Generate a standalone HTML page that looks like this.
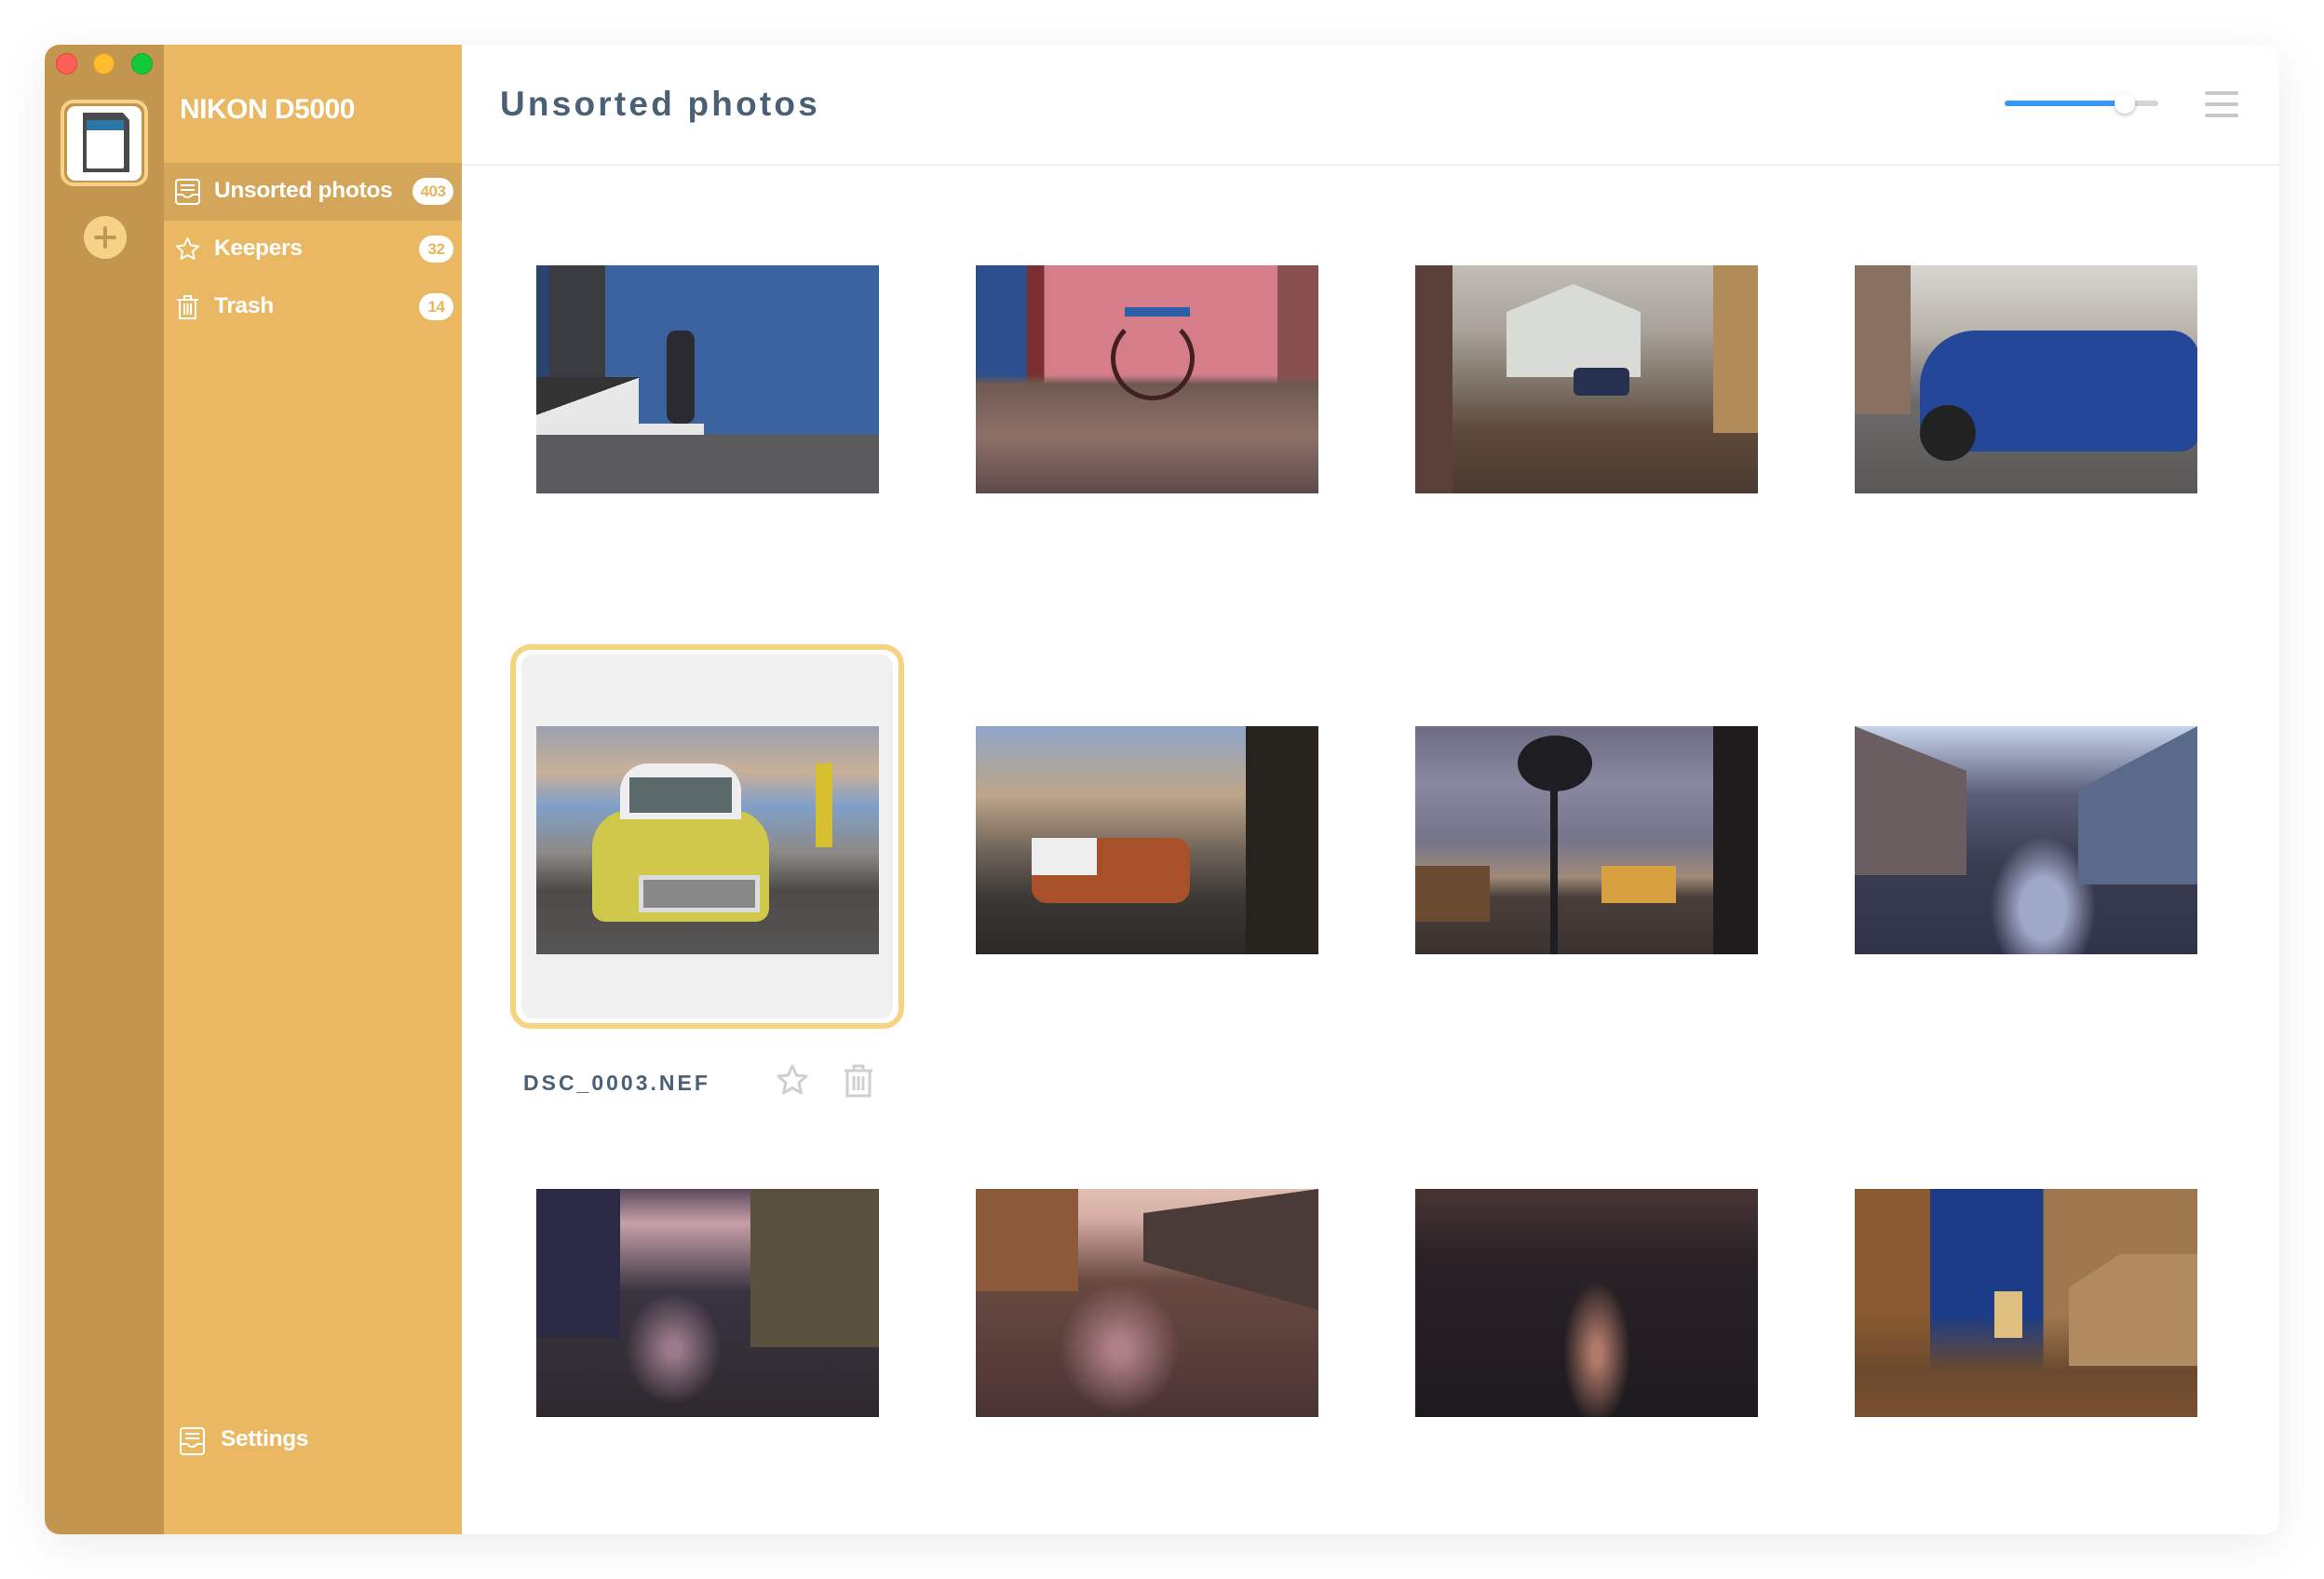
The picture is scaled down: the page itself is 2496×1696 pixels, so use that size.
<!DOCTYPE html>
<html><head><meta charset="utf-8"><style>
*{margin:0;padding:0;box-sizing:border-box}
body{width:2496px;height:1696px;background:#fff;position:relative;overflow:hidden;font-family:"Liberation Sans",sans-serif}
.win{position:absolute;left:48px;top:48px;width:2400px;height:1600px;border-radius:16px;overflow:hidden;background:#fff;box-shadow:0 10px 50px rgba(0,0,0,.08)}
.strip{position:absolute;left:0;top:0;width:128px;height:100%;background:#c2964f}
.side{position:absolute;left:128px;top:0;width:320px;height:100%;background:#eab862}
.dot{position:absolute;top:9px;width:23px;height:23px;border-radius:50%}
.abs{position:absolute}
.nav{position:absolute;left:0;width:320px;height:62px;color:#fff;font-weight:bold;font-size:24.5px;letter-spacing:-0.3px}
.nav span.t{position:absolute;left:54px;top:16px}
.badge{position:absolute;right:9px;top:16px;height:29px;border-radius:15px;background:#fff;color:#e8b45c;font-size:17px;font-weight:bold;text-align:center;line-height:29px;letter-spacing:-0.5px}
.nav svg{position:absolute;left:12px;top:17px}
.ph{position:absolute;width:368px;height:245px;overflow:hidden}
.ph i{position:absolute;display:block}
</style></head><body>
<div class="win">
<div class="strip"></div>
<div class="dot" style="left:12px;background:#fe5f57;border:1px solid #e0443e"></div>
<div class="dot" style="left:52px;background:#febc2e;border:1px solid #dea123"></div>
<div class="dot" style="left:93px;background:#12c93a;border:1px solid #0fa82d"></div>
<div class="abs" style="left:17px;top:59px;width:94px;height:93px;border:4px solid #f5d285;border-radius:14px;background:#c2964f"></div>
<div class="abs" style="left:24px;top:66px;width:80px;height:80px;border-radius:9px;background:#fff"></div>
<svg class="abs" style="left:41px;top:73px" width="50" height="64" viewBox="0 0 50 64"><path d="M0 0H43L50 8V64H0Z" fill="#4a4a4a"/><rect x="4" y="8" width="40" height="52" rx="2" fill="#fff"/><rect x="4" y="8" width="40" height="11" fill="#2b76a6"/></svg>
<div class="abs" style="left:42px;top:184px;width:46px;height:46px;border-radius:50%;background:#f5d285"></div>
<div class="abs" style="left:53px;top:205px;width:24px;height:4px;background:#c2964f;border-radius:2px"></div>
<div class="abs" style="left:63px;top:195px;width:4px;height:24px;background:#c2964f;border-radius:2px"></div>

<div class="side">
<div class="abs" style="left:65px;top:53px;color:#fff;font-weight:bold;font-size:30px;letter-spacing:-0.5px;left:17px">NIKON D5000</div>
<div class="nav" style="top:127px;background:#d4a65a">
<svg width="27" height="28" viewBox="0 0 27 28" fill="none" stroke="#fff" stroke-width="2"><rect x="1" y="1" width="25" height="26" rx="3"/><path d="M6 7H21M6 12H21M1 17H8Q13 23 19 17H26"/></svg>
<span class="t">Unsorted photos</span><div class="badge" style="width:44px">403</div></div>
<div class="nav" style="top:189px">
<svg width="27" height="27" viewBox="0 0 27 27" fill="none" stroke="#fff" stroke-width="2" stroke-linejoin="round"><path d="M13.5 2L17 9.5L25 10.5L19 16L20.5 24L13.5 20L6.5 24L8 16L2 10.5L10 9.5Z"/></svg>
<span class="t">Keepers</span><div class="badge" style="width:37px">32</div></div>
<div class="nav" style="top:251px">
<svg width="27" height="28" viewBox="0 0 27 28" fill="none" stroke="#fff" stroke-width="2"><path d="M2 6H25M10 6V2H17V6M5 6V26H22V6M10 10V22M13.5 10V22M17 10V22"/></svg>
<span class="t">Trash</span><div class="badge" style="width:37px">14</div></div>
<div class="nav" style="top:1468px">
<svg style="left:17px" width="27" height="30" viewBox="0 0 27 30" fill="none" stroke="#fff" stroke-width="2"><rect x="1" y="1" width="25" height="28" rx="3"/><path d="M6 7H21M6 12H21M1 18H8Q13 24 19 18H26"/></svg>
<span class="t" style="left:61px">Settings</span></div>
</div>

<div class="abs" style="left:489px;top:43px;color:#4a6075;font-weight:bold;font-size:37px;letter-spacing:3.2px">Unsorted photos</div>
<div class="abs" style="left:448px;top:128px;width:1952px;height:2px;background:#efefef"></div>
<div class="abs" style="left:2105px;top:60px;width:165px;height:6px;border-radius:3px;background:#d6d6d6"></div>
<div class="abs" style="left:2105px;top:60px;width:128px;height:6px;border-radius:3px;background:#3a97f6"></div>
<div class="abs" style="left:2223px;top:52px;width:22px;height:22px;border-radius:50%;background:#fff;box-shadow:0 2px 5px rgba(0,0,0,.25)"></div>
<div class="abs" style="left:2320px;top:50px;width:36px;height:4px;border-radius:2px;background:#c8c8c8"></div>
<div class="abs" style="left:2320px;top:62px;width:36px;height:4px;border-radius:2px;background:#c8c8c8"></div>
<div class="abs" style="left:2320px;top:74px;width:36px;height:4px;border-radius:2px;background:#c8c8c8"></div>

<div class="abs" style="left:500px;top:644px;width:423px;height:413px;border:6px solid #f6d381;border-radius:22px;background:#fff"></div>
<div class="abs" style="left:512px;top:655px;width:399px;height:391px;border-radius:12px;background:#f1f1f1"></div>
<div class="abs" style="left:514px;top:1102px;color:#4a6075;font-weight:bold;font-size:23px;letter-spacing:3px">DSC_0003.NEF</div>
<svg class="abs" style="left:785px;top:1095px" width="36" height="34" viewBox="0 0 36 34" fill="none" stroke="#cfcfcf" stroke-width="3" stroke-linejoin="round"><path d="M18 2L22.5 12L33 13L25 20L27.5 31L18 25.5L8.5 31L11 20L3 13L13.5 12Z"/></svg>
<svg class="abs" style="left:857px;top:1095px" width="34" height="36" viewBox="0 0 34 36" fill="none" stroke="#cfcfcf" stroke-width="3"><path d="M2 7H32M12 7V2H22V7M5 7V34H29V7M12 13V28M17 13V28M22 13V28"/></svg>

<!-- row1 -->
<div class="ph" style="left:528px;top:237px;background:linear-gradient(180deg,#3a63a0 0 74%,#5b5b5e 74% 100%)">
<i style="left:0;top:0;width:14px;height:180px;background:#2a4470"></i>
<i style="left:14px;top:0;width:60px;height:155px;background:#3b3c42"></i>
<i style="left:0;top:120px;width:110px;height:62px;background:linear-gradient(160deg,#333 0 40%,#e8e8e8 40% 100%)"></i>
<i style="left:0;top:170px;width:180px;height:12px;background:#e6e6e6"></i>
<i style="left:140px;top:70px;width:30px;height:100px;background:#2a2a30;border-radius:10px"></i>
</div>
<div class="ph" style="left:1000px;top:237px;background:linear-gradient(180deg,rgba(0,0,0,0) 48%,#6e5a52 52%,#8d7068 75%,#5e4a4a 100%),linear-gradient(90deg,#2d4f8e 0 15%,#7a3030 15% 20%,#d57e8a 20% 88%,#8a5050 88%)">
<i style="left:145px;top:55px;width:90px;height:90px;border:5px solid #402020;border-radius:50%;border-top-color:transparent"></i>
<i style="left:160px;top:45px;width:70px;height:10px;background:#2d5fa8"></i>
</div>
<div class="ph" style="left:1472px;top:237px;background:linear-gradient(180deg,#c0bcb6 0%,#a9a39b 28%,#7e7368 52%,#5d4a3c 72%,#4a3a30 100%)">
<i style="left:80px;top:20px;width:180px;height:100px;background:#d9dcd6;clip-path:polygon(10% 30%,50% 0,90% 30%,90% 100%,10% 100%)"></i>
<i style="left:0;top:0;width:40px;height:245px;background:#5a4038"></i>
<i style="left:320px;top:0;width:48px;height:180px;background:#b08a58"></i>
<i style="left:170px;top:110px;width:60px;height:30px;background:#263250;border-radius:6px"></i>
</div>
<div class="ph" style="left:1944px;top:237px;background:linear-gradient(180deg,#d8d6d2 0%,#b8b3aa 30%,#6c6a6a 60%,#5a5856 100%)">
<i style="left:70px;top:70px;width:300px;height:130px;background:#25479a;border-radius:60px 30px 20px 30px"></i>
<i style="left:70px;top:150px;width:60px;height:60px;background:#222;border-radius:50%"></i>
<i style="left:0;top:0;width:60px;height:160px;background:#8a7060"></i>
</div>
<!-- row2 -->
<div class="ph" style="left:528px;top:732px;background:linear-gradient(180deg,#9aa0b0 0%,#c9b098 20%,#7fa0c8 35%,#8d8a88 55%,#4e4a48 72%,#555 100%)">
<i style="left:60px;top:90px;width:190px;height:120px;background:#cfc84a;border-radius:40px 40px 14px 14px"></i>
<i style="left:90px;top:40px;width:130px;height:60px;background:#eee;border-radius:30px 30px 0 0"></i>
<i style="left:100px;top:55px;width:110px;height:38px;background:#5a6a6a"></i>
<i style="left:110px;top:160px;width:130px;height:40px;background:#888;border:5px solid #ddd"></i>
<i style="left:300px;top:40px;width:18px;height:90px;background:#d6c030"></i>
</div>
<div class="ph" style="left:1000px;top:732px;background:linear-gradient(180deg,#8fa6c8 0%,#bda58a 30%,#6f6359 55%,#3b3836 75%,#2b2826 100%)">
<i style="left:290px;top:0;width:78px;height:245px;background:#27231f"></i>
<i style="left:60px;top:120px;width:170px;height:70px;background:#a8502a;border-radius:16px"></i>
<i style="left:60px;top:120px;width:70px;height:40px;background:#eee"></i>
</div>
<div class="ph" style="left:1472px;top:732px;background:linear-gradient(180deg,#6c6c84 0%,#8a88a0 25%,#76748a 50%,#a08a78 66%,#4a3e3a 75%,#3a3230 100%)">
<i style="left:145px;top:20px;width:8px;height:225px;background:#1e1e22"></i>
<i style="left:110px;top:10px;width:80px;height:60px;background:#1e1e22;border-radius:50%"></i>
<i style="left:320px;top:0;width:48px;height:245px;background:#1f1c1e"></i>
<i style="left:0;top:150px;width:80px;height:60px;background:#6a4a30"></i>
<i style="left:200px;top:150px;width:80px;height:40px;background:#d8a040"></i>
</div>
<div class="ph" style="left:1944px;top:732px;background:radial-gradient(ellipse 22% 45% at 55% 80%,#a0a8c8 30%,rgba(0,0,0,0) 70%),linear-gradient(180deg,#c8d4ec 0%,#5a5e78 30%,#3a3c50 60%,#30334a 100%)">
<i style="left:0;top:0;width:120px;height:160px;background:#6a5e60;clip-path:polygon(0 0,100% 30%,100% 100%,0 100%)"></i>
<i style="left:240px;top:0;width:128px;height:170px;background:#5a6a8a;clip-path:polygon(0 40%,100% 0,100% 100%,0 100%)"></i>
</div>
<!-- row3 -->
<div class="ph" style="left:528px;top:1229px;background:radial-gradient(ellipse 20% 35% at 40% 70%,#9a7a8a 10%,rgba(0,0,0,0) 70%),linear-gradient(180deg,#5a4a5c 0%,#c8a0a8 15%,#3a3440 45%,#2e282e 100%)">
<i style="left:0;top:0;width:90px;height:160px;background:#2a2a44"></i>
<i style="left:230px;top:0;width:138px;height:170px;background:#5a5040"></i>
</div>
<div class="ph" style="left:1000px;top:1229px;background:radial-gradient(ellipse 25% 40% at 42% 70%,#b08088 10%,rgba(0,0,0,0) 70%),linear-gradient(180deg,#e0c0b0 0%,#d8b0a8 12%,#6a4a42 40%,#4a3434 100%)">
<i style="left:0;top:0;width:110px;height:110px;background:#8a5a3a"></i>
<i style="left:180px;top:0;width:188px;height:130px;background:#4a3a38;clip-path:polygon(0 20%,100% 0,100% 100%,0 60%)"></i>
</div>
<div class="ph" style="left:1472px;top:1229px;background:radial-gradient(ellipse 14% 45% at 53% 72%,#b07a6a 10%,rgba(0,0,0,0) 70%),linear-gradient(180deg,#4a3434 0%,#2a2226 30%,#1e1a1e 100%)"></div>
<div class="ph" style="left:1944px;top:1229px;background:linear-gradient(180deg,rgba(0,0,0,0) 55%,#6a4a2e 80%,#7a5030 100%),linear-gradient(90deg,#8a5a30 0 22%,#1c3c88 22% 55%,#a07850 55% 100%)">
<i style="left:150px;top:110px;width:30px;height:50px;background:#e0c080"></i>
<i style="left:230px;top:70px;width:138px;height:120px;background:#b08a60;clip-path:polygon(0 30%,40% 0,100% 0,100% 100%,0 100%)"></i>
</div>
</div>
</body></html>
